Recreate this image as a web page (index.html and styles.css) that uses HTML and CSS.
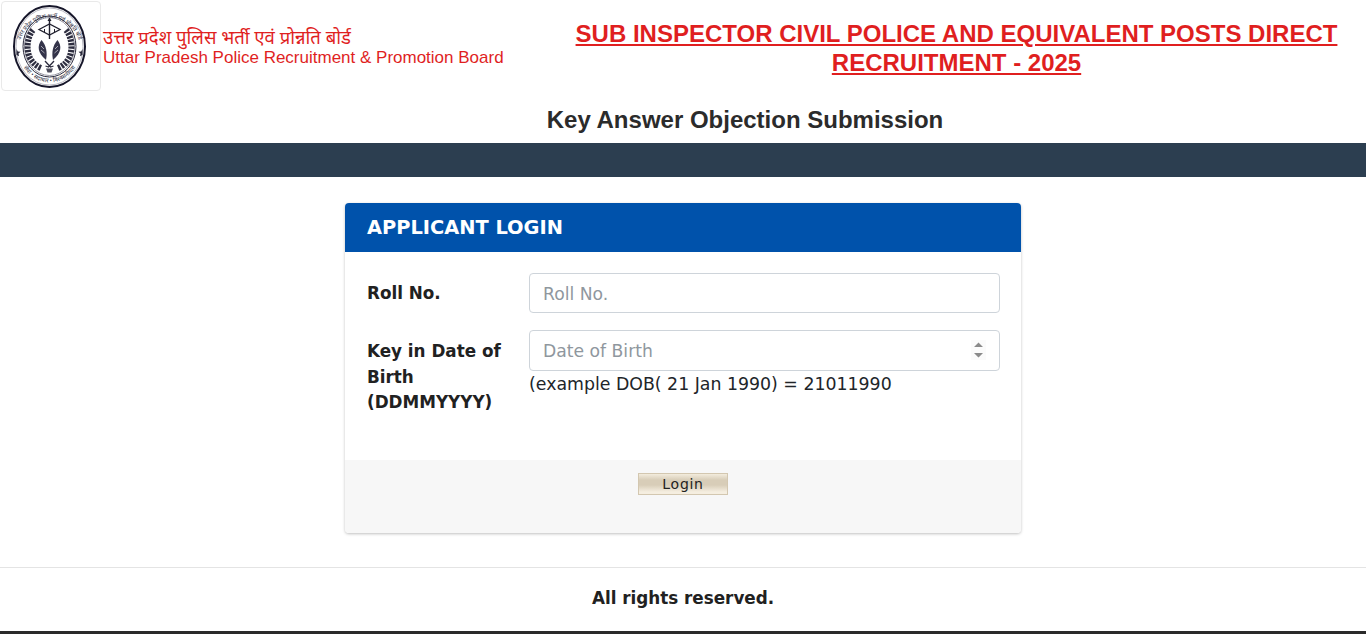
FILE: index.html
```html
<!DOCTYPE html>
<html lang="en">
<head>
<meta charset="utf-8">
<title>Key Answer Objection Submission</title>
<link rel="stylesheet" href="styles.css">
</head>
<body>
<header class="top">
  <div class="logo-box">
    <svg class="logo" viewBox="0 0 73 83" width="73" height="83" aria-hidden="true">
      <defs>
        <path id="arc-top" d="M4.5 50A32 37 0 1 1 68.500 50"/>
        <path id="arc-bot" d="M8 58A32.500 37.500 0 0 0 65 58"/>
      </defs>
      <ellipse cx="36.500" cy="41.500" rx="35.500" ry="40.500" fill="#fff" stroke="#16162a" stroke-width="2"/>
      <ellipse cx="36.500" cy="41.500" rx="33.500" ry="38.500" fill="none" stroke="#8c8c9a" stroke-width=".6"/>
      <ellipse cx="36.500" cy="41.500" rx="26.500" ry="30.500" fill="none" stroke="#2a2a3c" stroke-width="1"/>
      <ellipse cx="36.500" cy="41.500" rx="25" ry="29" fill="none" stroke="#6c6c7c" stroke-width=".7"/>
      <text class="seal"><textPath href="#arc-top" startOffset="50%" text-anchor="middle">उत्तर प्रदेश पुलिस भर्ती एवं प्रोन्नति बोर्ड</textPath></text>
      <text class="seal"><textPath href="#arc-bot" startOffset="50%" text-anchor="middle">सेवा • सदाचार • विश्वसनीयता</textPath></text>
      <path d="M3.500 44l1.300 2.500 2.700.3-2 1.800.5 2.700-2.500-1.300z M69.500 44l-1.300 2.500-2.700.3 2 1.800-.5 2.700 2.500-1.300z" fill="#2a2a3c"/>
      <path d="M20 25C14 32 13 45 17 53c3 5 6 8 11 10" fill="none" stroke="#2e2e40" stroke-width="6" stroke-dasharray="2.400 1.100"/>
      <path d="M53 25c6 7 7 20 3 28-3 5-6 8-11 10" fill="none" stroke="#2e2e40" stroke-width="6" stroke-dasharray="2.400 1.100"/>
      <path d="M36.500 13v21" fill="none" stroke="#20202e" stroke-width="1.400"/>
      <path d="M34.500 16l2-3.500 2 3.500z" fill="#20202e"/>
      <path d="M26 24.500L36.500 19 47 24.500 36.500 30z" fill="none" stroke="#20202e" stroke-width="1.300"/>
      <path d="M31.500 24v3M41.500 24v3" stroke="#20202e" stroke-width="1"/>
      <path d="M28.500 35c-4.500 5.500-4 13 4.500 20 1.500-7 .5-14.500-4.500-20z" fill="#34344a"/>
      <path d="M44.500 35c4.500 5.500 4 13-4.500 20-1.500-7-.5-14.500 4.500-20z" fill="#34344a"/>
      <path d="M28 41l3 3M28 45l3.500 3M45 41l-3 3M45 45l-3.500 3" stroke="#d8d8de" stroke-width=".7"/>
      <path d="M32 56l5.500 6 3-1M41 56l-5.500 6-3-1" fill="none" stroke="#2a2a3c" stroke-width="1.300"/>
      <path d="M33 63.500h7l-1.500 4h-4z" fill="#4d4d5c"/>
    </svg>
  </div>
  <div class="org">
    <div class="org-hi">उत्तर प्रदेश पुलिस भर्ती एवं प्रोन्नति बोर्ड</div>
    <div class="org-en">Uttar Pradesh Police Recruitment &amp; Promotion Board</div>
  </div>
  <h1 class="exam">SUB INSPECTOR CIVIL POLICE AND EQUIVALENT POSTS DIRECT RECRUITMENT - 2025</h1>
</header>
<h2 class="page-title">Key Answer Objection Submission</h2>
<div class="band"></div>
<main class="content">
  <section class="card">
    <h3 class="card-head">APPLICANT LOGIN</h3>
    <div class="card-body">
      <div class="row">
        <label class="label" for="roll">Roll No.</label>
        <div class="field"><input class="input" id="roll" type="text" placeholder="Roll No."></div>
      </div>
      <div class="row">
        <label class="label label-tall" for="dob">Key in Date of Birth (DDMMYYYY)</label>
        <div class="field">
          <div class="input-wrap">
            <input class="input input-dob" id="dob" type="text" placeholder="Date of Birth">
            <svg class="spin" viewBox="0 0 15 20" width="15" height="20" aria-hidden="true"><rect width="15" height="20" fill="#fbfbfb"/><path d="M7.500 2.500L12 7H3zM3 13h9l-4.500 4.500z" fill="#8a8a8a"/></svg>
          </div>
          <div class="hint">(example DOB( 21 Jan 1990) = 21011990</div>
        </div>
      </div>
    </div>
    <div class="card-foot"><button class="btn" type="button">Login</button></div>
  </section>
</main>
<footer class="foot">All rights reserved.</footer>
<div class="bottom"></div>
</body>
</html>
```
FILE: styles.css
```css
* { box-sizing: border-box; }
html, body { margin: 0; padding: 0; }
body {
  background: #fff;
  color: #212529;
  font-family: "DejaVu Sans", Verdana, sans-serif;
  font-size: 16px;
  height: 634px;
  overflow: hidden;
}
.top { display: flex; align-items: flex-start; height: 101px; }
.logo-box {
  width: 100px; height: 90px; margin: 1px 0 0 1px;
  border: 1px solid #e9e9e9; border-radius: 4px;
  display: flex; align-items: center; justify-content: center;
  padding-right: 4px; flex: none;
}
.seal { font: 5.800px "Noto Sans", "Liberation Sans", sans-serif; fill: #2a2a3c; }
.org { width: 472px; padding: 24px 0 0 2px; flex: none; color: #e01f1f; font-family: "Liberation Sans", Arial, sans-serif; }
.org-hi { font-size: 18.500px; line-height: 25px; font-family: "Noto Sans", "Liberation Sans", sans-serif; }
.org-en { font-size: 17px; line-height: 17px; }
.exam {
  flex: 1; margin: 19px 26px 0 0; padding: 0;
  color: #e01f1f; font: bold 24px/29px "Liberation Sans", Arial, sans-serif;
  text-align: center; text-decoration: underline;
}
.page-title {
  margin: 0; padding-left: 124px; height: 42px;
  font: bold 24px/37px "Liberation Sans", Arial, sans-serif;
  color: #2b2b2b; text-align: center;
}
.band { height: 34px; background: #2c3e50; }
.content { padding-top: 26px; display: flex; justify-content: center; }
.card {
  width: 676px; height: 330px; border-radius: 4px; overflow: hidden; background: #fff;
  box-shadow: 0 1px 3px rgba(0,0,0,.25);
  display: flex; flex-direction: column;
}
.card-head {
  margin: 0; height: 49px; padding: 0 22px;
  background: #0052ab; color: #fff;
  font: bold 19.400px/49px "DejaVu Sans", Verdana, sans-serif;
}
.card-body { height: 208px; padding: 21px 21px 0 22px; display: flex; flex-direction: column; gap: 17px; }
.row { display: flex; }
.label { width: 162px; padding: 8px 14px 0 0; flex: none; font-weight: bold; font-size: 16.800px; line-height: 25.500px; color: #212121; }
.label-tall { padding-top: 9px; }
.field { flex: 1; }
.input-wrap { position: relative; }
.input {
  display: block; width: 100%; height: 40px; padding: 1px 13px 0;
  border: 1px solid #ced4da; border-radius: 4px; background: #fff;
  font: 17.200px "DejaVu Sans", Verdana, sans-serif; color: #333; outline: 0;
}
.input-dob { height: 41px; }
.input::placeholder { color: #8f979e; opacity: 1; }
.spin { position: absolute; right: 14px; top: 10px; }
.hint { font-size: 17.350px; line-height: 27px; color: #212529; }
.card-foot { flex: 1; background: #f7f7f7; display: flex; justify-content: center; align-items: flex-start; padding: 13px 0 0 0; }
.btn {
  width: 90px; height: 22px; padding: 0;
  border: 1px solid #d3c7b0; border-radius: 0;
  background: linear-gradient(#f3ecdd 0, #d8cdb8 30%, #d8cdb8 55%, #f5eee0 90%);
  font: 14px/18px "DejaVu Sans", Verdana, sans-serif; letter-spacing: .7px; color: #222;
}
.foot {
  margin-top: 34px; height: 64px; border-top: 1px solid #e4e4e4;
  text-align: center; font-weight: bold; font-size: 16.800px; line-height: 61px; color: #212121;
}
.bottom { height: 3px; background: #2a2a2a; }
```
